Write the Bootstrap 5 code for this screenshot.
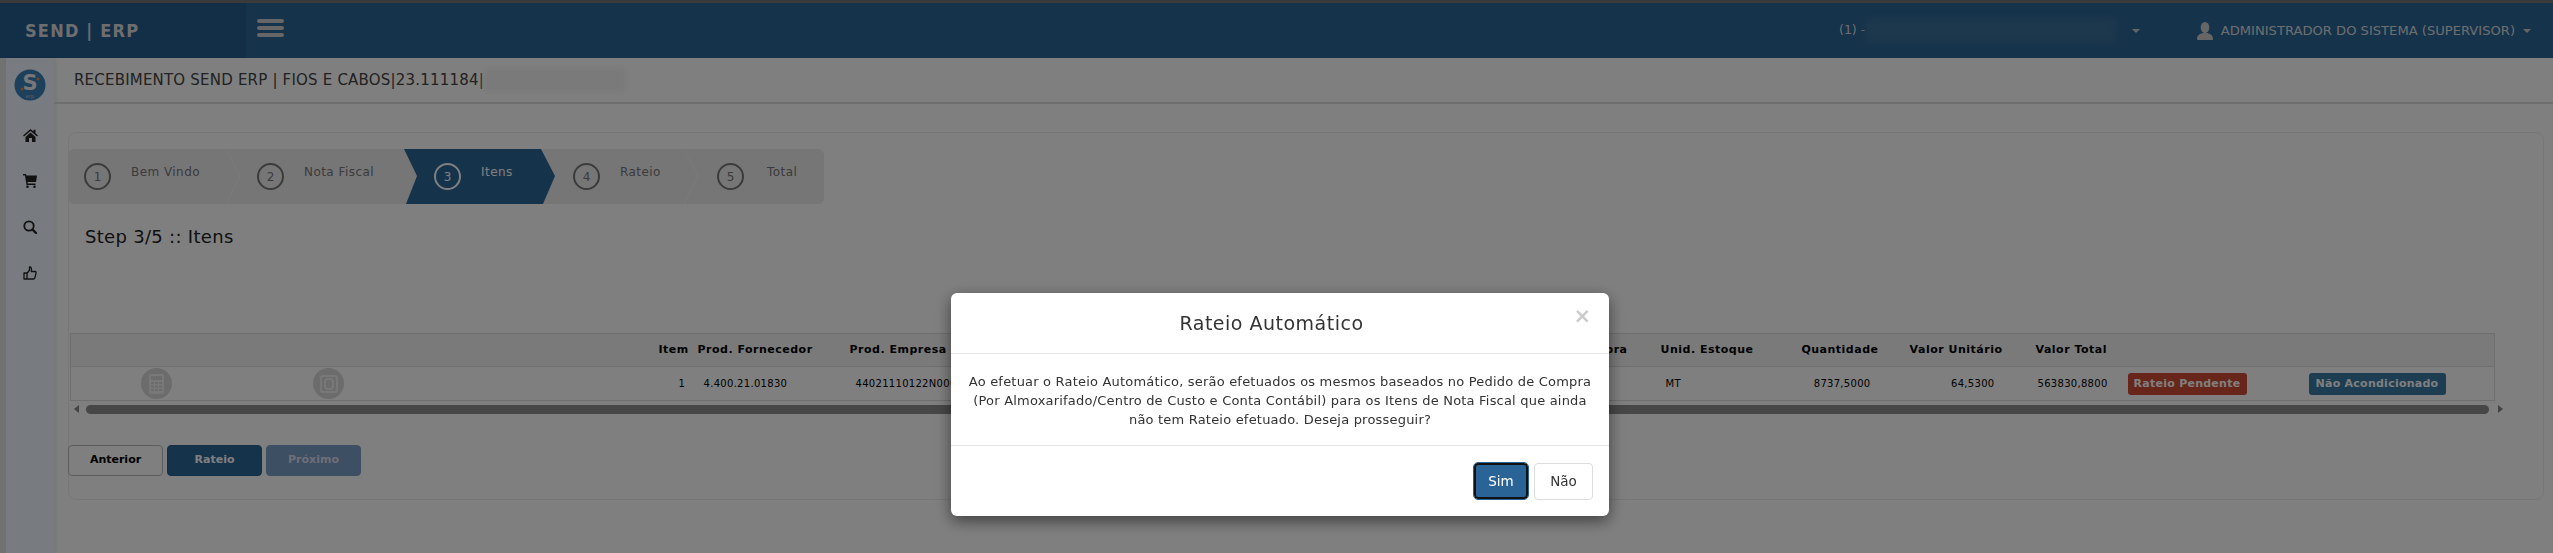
<!DOCTYPE html>
<html lang="pt-BR">
<head>
<meta charset="utf-8">
<title>Send ERP</title>
<link href="https://cdn.jsdelivr.net/npm/bootstrap@5.3.0/dist/css/bootstrap.min.css" rel="stylesheet">
<style>
html,body{height:553px;overflow:hidden}
body{background:#fff;font-family:"DejaVu Sans",Verdana,sans-serif;color:#333;font-size:12px}
.topstrip{height:3px;background:#747474}
.topbar{height:55px;background:#2c6699;color:#fff}
.brandbox{width:246px;background:#265c8e;padding-left:25px;font-family:"DejaVu Sans Condensed","DejaVu Sans",sans-serif;font-size:18px;font-weight:700;letter-spacing:1.2px;color:#ddd}
.burger{width:27px;margin-left:11px;margin-bottom:5px}
.burger i{display:block;height:4px;background:#ccc;border-radius:2px;margin:3px 0}
.unitbox{margin-left:1555px;font-size:12.5px;color:#ddd}
.blurbar{width:250px;height:25px;background:#3a7099;margin-left:1px;filter:blur(3px)}
.navcaret{width:0;height:0;border:4px solid transparent;border-top-color:#ccc;border-bottom:0}
.userbox{font-size:13.1px;color:#ddd;padding-right:22px}
.mainrow{height:495px}
.sideedge{width:6px;background:#e2e2e2}
.sidebarx{width:48px;background:#f0f6ff;box-shadow:2px 0 4px rgba(0,0,0,.08);padding-top:11px}
.sidebtn{height:46px;color:#222}
.logoS{margin-bottom:11px}
.pagehead{height:46px;border-bottom:2px solid #ddd;padding-left:20px;font-size:15px;letter-spacing:.2px;color:#444}
.headblur{width:142px;height:24px;background:#f4f4f4;filter:blur(3px)}
.panelx{margin:28px 9px 0 14px;height:368px;border:1px solid #eee;border-radius:8px;padding-top:16px}
.wizardx{height:55px;width:756px;background:#ececec;border-radius:6px;margin-left:-1px;color:#777}
.wstep{position:relative;height:55px;flex:none}
.wstep svg.sep{position:absolute;top:0;left:100%}
.s1{width:158px;padding-left:16px}
.s2{width:178px;padding-left:31px}
.s3{width:151px;margin-right:-14px;padding-left:30px;background:#2c6699;color:#fff;clip-path:polygon(0 0,137px 0,151px 27px,139px 55px,2px 55px,13px 27px);z-index:1}
.s4{width:143px;padding-left:32px}
.s5{width:140px;padding-left:33px}
.circ{width:27px;height:27px;border:2px solid #777;border-radius:50%;flex:none;font-size:12px;line-height:1}
.s3 .circ{border-color:#fff}
.wlabel{margin-left:20px;margin-bottom:9px;font-size:12px;letter-spacing:.45px;white-space:nowrap}
.s5 .wlabel{margin-left:23px}
.steptitle{font-size:18px;letter-spacing:.3px;line-height:24px;margin:21px 0 0 16px;color:#222}
.gridwrap{margin:84px 0 0 1px;width:2424px}
.gridx{table-layout:fixed;width:2424px;border-collapse:collapse;border:1px solid #ddd;margin:0}
.gridx .w1,.gridx .w2{width:172px}.gridx .w3{width:240px}.gridx .w4{width:39px}.gridx .w5{width:152px}.gridx .w6{width:155px}.gridx .w7{width:656px}.gridx .w8{width:134px}.gridx .w9{width:110px}.gridx .w10{width:130px}.gridx .w11{width:90px}.gridx .w12{width:180px}.gridx .w13{width:194px}
.gridx th,.gridx td{padding:0;white-space:nowrap;vertical-align:middle;border-top:1px solid #ddd;font-size:10px;letter-spacing:.3px;background:transparent;color:#000;overflow:hidden;border-bottom:0}
.gridx th{font-weight:700;font-size:11px;letter-spacing:.5px;height:33px;background:#f5f5f5}
.gridx td{height:34px}
.gridx .tr{text-align:right}
.gridx .tl{text-align:left}
.gridx .pl4{padding-left:4px}.gridx .pl5{padding-left:5px}.gridx .pl7{padding-left:7px}.gridx .pl8{padding-left:8px}.gridx .pl9{padding-left:9px}.gridx .pl10{padding-left:10px}.gridx .pl24{padding-left:24px}
.gridx .pr22{padding-right:22px}.gridx .pr28{padding-right:28px}.gridx .pr29{padding-right:29px}.gridx .pr30{padding-right:30px}.gridx .pr36{padding-right:36px}
.roundico{width:31px;height:31px;background:#d8d8d8;border-radius:50%;margin:auto}
.lbl{display:inline-block;height:22px;line-height:22px;border-radius:3px;color:#fff;font-weight:700;font-size:11px;letter-spacing:.25px;text-align:center}
.lblred{width:119px;background:#d04a35}
.lblblue{width:137px;background:#387aa5}
.scrollx{height:10px;margin-top:3px;gap:7px;width:2434px}
.thumbx{flex:1;height:9px;background:#8e8e8e;border-radius:5px}
.arrL{width:0;height:0;border:4px solid transparent;border-right:5px solid #888;border-left:0;margin-left:5px}
.arrR{width:0;height:0;border:4px solid transparent;border-left:5px solid #888;border-right:0;margin-left:2px}
.btnrow{margin-top:31px;gap:4px;margin-left:-1px}
.btnx{width:95px;height:31px;padding:0;font-size:11px;font-weight:700;border-radius:4px}
.btn.bt-def{background:#fff;border:1px solid #bbb;color:#000}
.btn.bt-pri{background:#2c6699;border:1px solid #285f90;color:#fff}
.btn.bt-dis:disabled{background:#7a9ec4;border:1px solid #7a9ec4;color:#dde;opacity:1}
.backdropx{position:fixed;inset:0;background:rgba(0,0,0,.5);z-index:1040}
.dlg{position:fixed;left:951px;top:293px;width:658px;height:223px;z-index:1050;border:0;border-radius:6px;box-shadow:0 5px 15px rgba(0,0,0,.5);background:#fff}
.dlg .modal-header{height:61px;padding:0 15px;border-bottom:1px solid #e5e5e5;position:relative}
.dlg .modal-title{font-size:19px;color:#333;margin-right:17px;font-weight:400;letter-spacing:.5px}
.closex{position:absolute;right:18px;top:13px;font-size:21px;font-weight:700;line-height:1;color:#ccc;background:none;border:0;padding:0}
.dlg .modal-body{height:91px;padding:18px 15px 0;font-size:13px;line-height:19px;text-align:center;color:#333;letter-spacing:.2px;flex:none}
.dlg .modal-footer{height:71px;padding:17px 16px 0 0;border-top:1px solid #e5e5e5;align-items:flex-start;gap:6px;flex:none}
.dlg .modal-footer>*{margin:0}
.b-sim{width:54px;height:36px;padding:0;font-size:13.5px;border-radius:4px}
.btn.b-sim{background:#2a6496;color:#fff;border:2px solid #111;outline:1px solid #2a6496}
.btn.b-nao{width:59px;height:37px;padding:0;background:#fff;color:#333;font-size:13.5px;border:1px solid #ddd;border-radius:4px}
</style>
</head>
<body>
<div class="topstrip"></div>
<div class="topbar d-flex">
  <div class="brandbox d-flex align-items-center">SEND | ERP</div>
  <div class="d-flex align-items-center">
    <div class="burger"><i></i><i></i><i></i></div>
  </div>
  <div class="d-flex align-items-center unitbox">
    <span>(1) -</span><span class="blurbar"></span><span class="navcaret ms-3"></span>
  </div>
  <div class="d-flex align-items-center userbox ms-auto">
    <svg width="16" height="18" viewBox="0 0 16 18" class="me-2"><ellipse cx="8" cy="5.500" rx="4.300" ry="5.500" fill="#ccc"/><path d="M0 17c0-4 3-5 5.500-6h5c2.500 1 5.500 2 5.500 6 0 .6-.5 1-1 1H1c-.5 0-1-.4-1-1z" fill="#ccc"/></svg>
    <span>ADMINISTRADOR DO SISTEMA (SUPERVISOR)</span><span class="navcaret ms-2"></span>
  </div>
</div>
<div class="mainrow d-flex">
  <div class="sideedge"></div>
  <div class="sidebarx d-flex flex-column align-items-center">
    <svg class="logoS" width="32" height="32" viewBox="0 0 32 32"><ellipse cx="16" cy="16" rx="15.500" ry="15.500" fill="#3a80b8"/><text x="16" y="21" font-family="DejaVu Sans" font-weight="700" font-size="21" text-anchor="middle" fill="#eee">S</text><circle cx="8" cy="20" r="1.500" fill="#e8863a"/><circle cx="24" cy="10" r="1.500" fill="#e8863a"/><text x="16" y="29" font-family="DejaVu Sans" font-size="5" text-anchor="middle" fill="#bcd">erp</text></svg>
    <div class="sidebtn d-flex align-items-center justify-content-center"><svg width="15" height="13" viewBox="0 0 15 13"><path d="M7.500 0 0 6.500l1 1 6.500-5.500 6.500 5.500 1-1-2.500-2.200V.8h-2v1.800zM2.500 8v5h3.500V9h3v4h3.500V8L7.500 3.500z" fill="#222"/></svg></div>
    <div class="sidebtn d-flex align-items-center justify-content-center"><svg width="14" height="14" viewBox="0 0 14 14"><path d="M0 0h3l.5 1.500H14l-1 6.500H4.500l.3 1.500H12.500V11H3.500L2 1.500H0z" fill="#222"/><circle cx="4.500" cy="12.700" r="1.300" fill="#222"/><circle cx="11.500" cy="12.700" r="1.300" fill="#222"/></svg></div>
    <div class="sidebtn d-flex align-items-center justify-content-center"><svg width="14" height="14" viewBox="0 0 14 14"><circle cx="6" cy="6" r="4.700" fill="none" stroke="#222" stroke-width="1.800"/><path d="M9.500 9.500 13 13" stroke="#222" stroke-width="2.300" stroke-linecap="round"/></svg></div>
    <div class="sidebtn d-flex align-items-center justify-content-center"><svg width="14" height="14" viewBox="0 0 14 14"><path d="M1 7h3v6H1zM4 7.500 6.500 4V1c1.800 0 2.300 1.300 1.800 4.500H12c1 0 1.300 1 1 1.800l-1.300 5c-.2.500-.6.700-1.100.700H4z" fill="none" stroke="#222" stroke-width="1.300" stroke-linejoin="round"/></svg></div>
  </div>
  <div class="flex-grow-1">
    <div class="pagehead d-flex align-items-center">
      <span>RECEBIMENTO SEND ERP | FIOS E CABOS|23.111184|</span><span class="headblur"></span>
    </div>
    <div class="panelx">
      <div class="wizardx d-flex">
        <div class="wstep s1 d-flex align-items-center"><span class="circ d-flex align-items-center justify-content-center">1</span><span class="wlabel">Bem Vindo</span><svg class="sep" width="14" height="55" viewBox="0 0 14 55"><polyline points="0,0 14,27 0,55" fill="none" stroke="#f4f4f4"/></svg></div>
        <div class="wstep s2 d-flex align-items-center"><span class="circ d-flex align-items-center justify-content-center">2</span><span class="wlabel">Nota Fiscal</span></div>
        <div class="wstep s3 d-flex align-items-center"><span class="circ d-flex align-items-center justify-content-center">3</span><span class="wlabel">Itens</span></div>
        <div class="wstep s4 d-flex align-items-center"><span class="circ d-flex align-items-center justify-content-center">4</span><span class="wlabel">Rateio</span><svg class="sep" width="14" height="55" viewBox="0 0 14 55"><polyline points="0,0 14,27 0,55" fill="none" stroke="#f4f4f4"/></svg></div>
        <div class="wstep s5 d-flex align-items-center"><span class="circ d-flex align-items-center justify-content-center">5</span><span class="wlabel">Total</span></div>
      </div>
      <div class="steptitle">Step 3/5 :: Itens</div>
      <div class="gridwrap">
        <table class="table gridx">
          <colgroup><col class="w1"><col class="w2"><col class="w3"><col class="w4"><col class="w5"><col class="w6"><col class="w7"><col class="w8"><col class="w9"><col class="w10"><col class="w11"><col class="w12"><col class="w13"></colgroup>
          <thead><tr>
            <th></th><th></th><th></th>
            <th class="tl pl4">Item</th><th class="tl pl4">Prod. Fornecedor</th><th class="tl pl4">Prod. Empresa</th><th class="tr pr29">Unid. Compra</th><th class="tl pl4">Unid. Estoque</th><th class="tr pr22">Quantidade</th><th class="tr pr28">Valor Unitário</th><th class="tl pl5">Valor Total</th><th></th><th></th>
          </tr></thead>
          <tbody><tr>
            <td><div class="roundico d-flex align-items-center justify-content-center"><svg width="15" height="20" viewBox="0 0 15 20"><rect width="15" height="20" rx="1.500" fill="#f0f0f0"/><rect x="2" y="2" width="11" height="4" fill="#d8d8d8"/><path d="M2 8h3v2H2zM6 8h3v2H6zM10 8h3v2h-3zM2 11.500h3v2H2zM6 11.500h3v2H6zM10 11.500h3v2h-3zM2 15h3v2H2zM6 15h3v2H6zM10 15h3v2h-3z" fill="#d8d8d8"/></svg></div></td>
            <td><div class="roundico d-flex align-items-center justify-content-center"><svg width="18" height="18" viewBox="0 0 18 18"><rect x="1" y="1" width="16" height="16" rx="2" fill="none" stroke="#f0f0f0" stroke-width="2"/><rect x="5" y="4" width="8" height="10" rx="3" fill="none" stroke="#f0f0f0" stroke-width="2"/></svg></div></td>
            <td></td>
            <td class="tl pl24">1</td><td class="tl pl10">4.400.21.01830</td><td class="tl pl10">44021110122N0000</td><td></td><td class="tl pl9">MT</td><td class="tr pr30">8737,5000</td><td class="tr pr36">64,5300</td><td class="tl pl7">563830,8800</td>
            <td class="tl pl7"><span class="lbl lblred">Rateio Pendente</span></td><td class="tl pl8"><span class="lbl lblblue">Não Acondicionado</span></td>
          </tr></tbody>
        </table>
      </div>
      <div class="scrollx d-flex align-items-center"><span class="arrL"></span><span class="thumbx"></span><span class="arrR"></span></div>
      <div class="btnrow d-flex">
        <button type="button" class="btn btnx bt-def">Anterior</button>
        <button type="button" class="btn btnx bt-pri">Rateio</button>
        <button type="button" class="btn btnx bt-dis" disabled>Próximo</button>
      </div>
    </div>
  </div>
</div>
<div class="backdropx"></div>
<div class="modal-content dlg d-flex flex-column">
  <div class="modal-header justify-content-center">
    <h4 class="modal-title">Rateio Automático</h4>
    <button type="button" class="closex">×</button>
  </div>
  <div class="modal-body">Ao efetuar o Rateio Automático, serão efetuados os mesmos baseados no Pedido de Compra (Por Almoxarifado/Centro de Custo e Conta Contábil) para os Itens de Nota Fiscal que ainda não tem Rateio efetuado. Deseja prosseguir?</div>
  <div class="modal-footer">
    <button type="button" class="btn b-sim">Sim</button>
    <button type="button" class="btn b-nao">Não</button>
  </div>
</div>
</body>
</html>
